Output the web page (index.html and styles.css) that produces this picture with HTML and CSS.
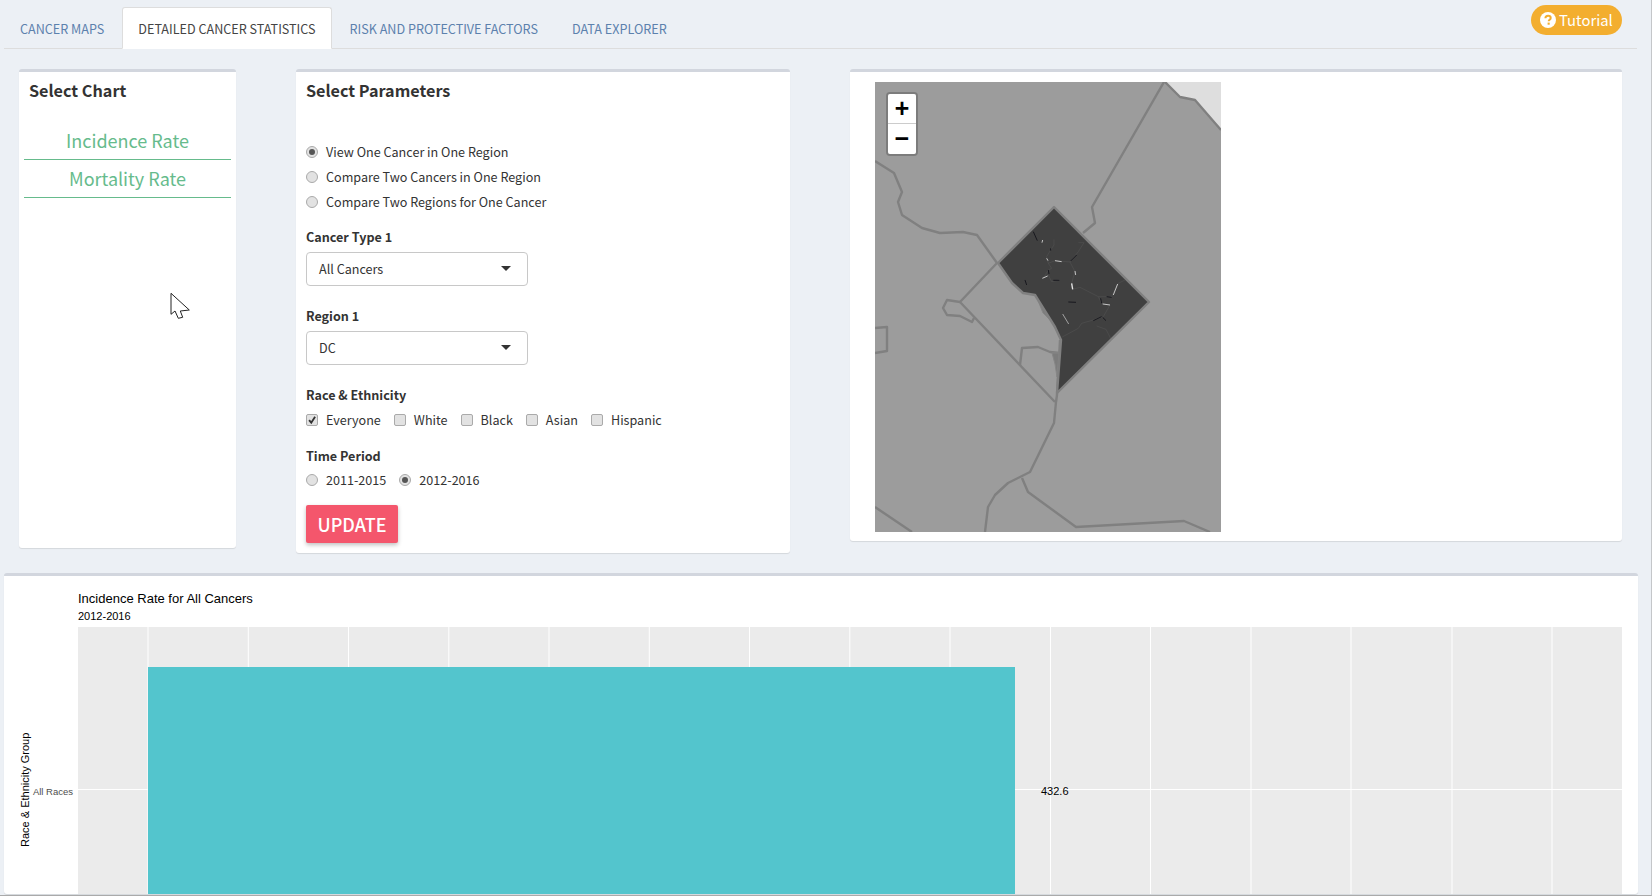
FILE: index.html
```html
<!DOCTYPE html>
<html>
<head>
    <meta charset="UTF-8">
    <title>Detailed Cancer Statistics</title>
    <link rel="stylesheet" href="styles.css">
</head>
<body>
    <div class="topbar">
        <ul class="tabs">
            <li class="tab">CANCER MAPS</li>
            <li class="tab active">DETAILED CANCER STATISTICS</li>
            <li class="tab">RISK AND PROTECTIVE FACTORS</li>
            <li class="tab">DATA EXPLORER</li>
        </ul>
        <button type="button" class="tutorial">
            <svg class="tutorial-icon" viewBox="0 0 16 16">
                <circle cx="8" cy="8" r="8" fill="#fff"/>
                <path d="M5.4 6.2c0-1.6 1.2-2.5 2.7-2.5s2.6.9 2.6 2.2c0 1.9-2 1.8-2 3.3" fill="none" stroke="#f3ae2f" stroke-width="2"/>
                <rect x="7.6" y="10.6" width="2.1" height="2.1" fill="#f3ae2f"/>
            </svg>
            Tutorial
        </button>
    </div>

    <div class="top-row">
        <section class="box chart-box">
            <h3 class="box-title">Select Chart</h3>
            <a class="chart-link first">Incidence Rate</a>
            <a class="chart-link">Mortality Rate</a>
        </section>

        <section class="box params-box">
            <h3 class="box-title">Select Parameters</h3>
            <div class="radio-stack">
                <label class="option"><span class="radio on"></span>View One Cancer in One Region</label>
                <label class="option"><span class="radio"></span>Compare Two Cancers in One Region</label>
                <label class="option"><span class="radio"></span>Compare Two Regions for One Cancer</label>
            </div>

            <div class="field-label label-type">Cancer Type 1</div>
            <div class="select"><span>All Cancers</span><i class="caret"></i></div>

            <div class="field-label label-region">Region 1</div>
            <div class="select"><span>DC</span><i class="caret"></i></div>

            <div class="field-label label-race">Race &amp; Ethnicity</div>
            <div class="inline-options">
                <label class="option"><span class="check on"><svg viewBox="0 0 12 12"><path d="M2.5 6.2l2.6 3 4.6-7" fill="none" stroke="#333" stroke-width="2.2"/></svg></span>Everyone</label>
                <label class="option"><span class="check"></span>White</label>
                <label class="option"><span class="check"></span>Black</label>
                <label class="option"><span class="check"></span>Asian</label>
                <label class="option"><span class="check"></span>Hispanic</label>
            </div>

            <div class="field-label label-time">Time Period</div>
            <div class="inline-options time-options">
                <label class="option"><span class="radio"></span>2011-2015</label>
                <label class="option"><span class="radio on"></span>2012-2016</label>
            </div>

            <button type="button" class="update">UPDATE</button>
        </section>

        <section class="box map-box">
            <div class="map">
                <svg class="map-svg" viewBox="0 0 346 450">
                    <rect width="346" height="450" fill="#9c9c9c"/>
                    <path d="M290 0L305 15 320 18 346 48V0z" fill="#dedede"/>
                    <g class="county">
                        <path d="M290 0L305 15 320 18 346 48"/>
                        <path d="M289 0L217 125 220 141 208 151"/>
                        <path d="M0 79L19 91 27 110 23 120 27 133 47 146 65 151 88 150 102 153 122 181 85 220 180 320"/>
                        <path d="M85 220L72 218 68 226 72 233 85 234 97 240 99 236"/>
                        <path d="M0 246L12 245V269L0 271"/>
                        <path d="M145 283L147 266 163 265 175 270 185 271"/>
                        <path d="M185 258L182 313 181 320 179 341 155 390 133 401 120 413 113 425 110 450"/>
                        <path d="M147 396L153 410 201 445 309 439 335 450"/>
                        <path d="M0 425L37 450"/>
                    </g>
                    <path d="M162 216L168 231 177 240 185 256 180 245 160 213zM177 271H184L182 295 180 282z" fill="#7c7c7c" stroke="#868686"/>
                    <path class="dc" d="M179 125L274 220 182 311 186 258 180 245 160 213 148 211 137 201 123 181z"/>
                    <g transform="translate(105 118) scale(.3333)" fill="none">
                        <g stroke="#5c5c5c" stroke-width="1.2">
                            <path d="M222 118V135L212 150 200 170 205 190 225 182 270 186 295 155 312 128 295 128"/>
                            <path d="M270 186L285 215 275 250 278 268 300 262 355 290H395L415 250 435 240"/>
                            <path d="M205 190L215 205 205 210 190 235 205 225 215 245 238 240"/>
                            <path d="M355 290L365 310 390 315 370 350 340 360 305 370 295 385 245 412"/>
                            <path d="M350 378L378 388 392 415"/>
                        </g>
                        <g stroke="#e4e4e4" stroke-width="2.4">
                            <path d="M225 182L245 185"/>
                            <path d="M200 175L204 182"/>
                            <path d="M285 213L287 225"/>
                            <path d="M275 250L278 268" stroke-width="4"/>
                            <path d="M400 285L413 252"/>
                            <path d="M368 312L390 315"/>
                            <path d="M248 342L266 372" stroke="#bbb"/>
                            <path d="M187 235L203 228"/>
                            <path d="M188 120L186 128"/>
                        </g>
                        <g stroke="#0c0c14" stroke-width="2.4">
                            <path d="M160 95L172 122"/>
                            <path d="M212 145V152"/>
                            <path d="M272 183L290 165"/>
                            <path d="M205 210L207 222"/>
                            <path d="M220 241H238"/>
                            <path d="M135 240L140 255"/>
                            <path d="M265 306L288 307"/>
                            <path d="M362 295L365 310"/>
                            <path d="M340 362L365 350"/>
                            <path d="M368 352L378 362"/>
                            <path d="M380 290L395 292"/>
                        </g>
                    </g>
                </svg>
                <div class="zoom-bar">
                    <a class="zoom-btn">+</a>
                    <a class="zoom-btn">&#8722;</a>
                </div>
            </div>
        </section>
    </div>

    <section class="box plot-box">
        <svg class="plot-svg" viewBox="0 0 1634 318">
            <text x="74" y="27" class="plot-title">Incidence Rate for All Cancers</text>
            <text x="74" y="44" class="plot-sub">2012-2016</text>
            <rect x="74" y="51" width="1544" height="267" fill="#ebebeb"/>
            <g class="grid">
                <path d="M144 51V318M244.300 51V318M344.500 51V318M444.800 51V318M545 51V318M645.300 51V318M745.500 51V318M845.800 51V318M946 51V318M1046.500 51V318M1146.500 51V318M1247 51V318M1347 51V318M1448 51V318M1548 51V318"/>
                <path d="M74 213.500H1618"/>
            </g>
            <rect x="144" y="91" width="867" height="227" fill="#53c5cd"/>
            <text x="1037" y="218.500" class="plot-value">432.6</text>
            <text x="69" y="218.500" class="plot-tick" text-anchor="end">All Races</text>
            <text transform="translate(25 271) rotate(-90)" class="plot-axis">Race &amp; Ethnicity Group</text>
        </svg>
    </section>

    <svg class="cursor" viewBox="0 0 20 28">
        <path d="M1 1.300V22.300L5 19 8.300 26.300 12.700 25.300 10.300 19 19.300 18z" fill="#fff" stroke="#222" stroke-width="1"/>
    </svg>
</body>
</html>
```

FILE: styles.css
```css
* {
    box-sizing: border-box;
}

html, body {
    margin: 0;
    height: 896px;
    overflow: hidden;
}

body {
    position: relative;
    background-color: #ecf0f5;
    border-right: 1px solid #c4c6c9;
    border-bottom: 1px solid #aaa;
    font-family: "Noto Sans CJK SC", "Open Sans", sans-serif;
    font-size: 12.600px;
    color: #333;
    padding: 0 14px 0 4px;
}

/* top tabs */
.topbar {
    display: flex;
    justify-content: space-between;
    align-items: flex-start;
    height: 49px;
    padding-top: 5px;
    border-bottom: 1px solid #ddd;
}

.tabs {
    display: flex;
    gap: 2px;
    list-style: none;
    margin: 2px 0 0;
    padding: 0;
}

.tab {
    height: 42px;
    padding: 0 15px;
    border: 1px solid transparent;
    border-radius: 3px 3px 0 0;
    font-size: 12.600px;
    line-height: 41px;
    color: #5c81ad;
}

.tab.active {
    background-color: #fff;
    border-color: #ddd #ddd #fff;
    color: #444;
}

.tutorial {
    display: flex;
    align-items: center;
    gap: 3px;
    width: 91px;
    height: 30px;
    margin-right: 15px;
    padding: 0 0 2px 9px;
    border: none;
    border-radius: 15px;
    background-color: #f3ae2f;
    color: #fff;
    font-family: inherit;
    font-size: 14.800px;
}

.tutorial-icon {
    width: 16px;
    height: 16px;
    margin-top: 2px;
}

/* boxes */
.box {
    background-color: #fff;
    border-top: 3px solid #d2d6de;
    border-radius: 3px;
    box-shadow: 0 1px 1px rgba(0, 0, 0, 0.1);
}

.top-row {
    display: flex;
    align-items: flex-start;
    gap: 60px;
    margin-top: 20px;
    padding-left: 15px;
}

.box-title {
    margin: 0;
    font-size: 16.200px;
    font-weight: 700;
    line-height: 24px;
    color: #333;
}

.chart-box {
    width: 217px;
    height: 479px;
    padding: 6px 5px 0;
}

.chart-box .box-title {
    padding-left: 5px;
}

.chart-link {
    display: block;
    height: 38px;
    border-bottom: 1px solid #66bb8c;
    text-align: center;
    font-size: 18px;
    line-height: 36px;
    color: #66bb8c;
}

.chart-link.first {
    margin-top: 20px;
}

.params-box {
    width: 494px;
    height: 484px;
    padding: 6px 10px 0;
}

.radio-stack {
    display: flex;
    flex-direction: column;
    gap: 5px;
    margin-top: 40px;
}

.option {
    display: flex;
    align-items: center;
    height: 20px;
    line-height: 20px;
    white-space: nowrap;
}

.radio, .check {
    flex: none;
    width: 12px;
    height: 12px;
    margin-right: 8px;
    background-color: #e2e2e2;
    border: 1px solid #aaa;
}

.radio {
    border-radius: 50%;
    display: flex;
    align-items: center;
    justify-content: center;
}

.radio.on::after {
    content: "";
    width: 6px;
    height: 6px;
    border-radius: 50%;
    background-color: #555;
}

.check {
    border-radius: 2px;
}

.check svg {
    display: block;
    width: 10px;
    height: 10px;
}

.field-label {
    font-weight: 700;
    line-height: 20px;
    color: #333;
}

.label-type { margin-top: 15px; }
.label-region { margin-top: 20px; }
.label-race { margin-top: 20px; }
.label-time { margin-top: 16px; }

.select {
    display: flex;
    align-items: center;
    justify-content: space-between;
    width: 222px;
    height: 34px;
    margin-top: 5px;
    padding: 0 16px 2px 12px;
    border: 1px solid #c8c8c8;
    border-radius: 4px;
}

.caret {
    width: 0;
    height: 0;
    border-left: 5px solid transparent;
    border-right: 5px solid transparent;
    border-top: 5px solid #333;
}

.inline-options {
    display: flex;
    gap: 13px;
    margin-top: 5px;
}

.time-options {
    margin-top: 4px;
}

.update {
    display: block;
    width: 92px;
    height: 38px;
    margin-top: 15px;
    padding: 0;
    border: none;
    border-radius: 2px;
    background-color: #f4566c;
    box-shadow: 0 2px 4px rgba(0, 0, 0, 0.25);
    color: #fff;
    font-family: inherit;
    font-size: 18px;
    font-weight: 500;
    line-height: 38px;
}

.map-box {
    width: 772px;
    height: 472px;
    padding: 10px 25px;
}

.map {
    position: relative;
    width: 346px;
    height: 450px;
}

.map-svg {
    display: block;
    width: 346px;
    height: 450px;
}

.county path {
    fill: none;
    stroke: #808080;
    stroke-width: 2.400;
    stroke-linejoin: round;
}

.dc {
    fill: #404040;
    stroke: #808080;
    stroke-width: 2.400;
    stroke-linejoin: round;
}

.zoom-bar {
    position: absolute;
    left: 11px;
    top: 10px;
    width: 32px;
    border: 2px solid rgba(0, 0, 0, 0.2);
    border-radius: 4px;
    background-clip: padding-box;
}

.zoom-btn {
    display: block;
    height: 30px;
    background-color: #fff;
    border-bottom: 1px solid #ccc;
    text-align: center;
    font-family: "Liberation Mono", monospace;
    font-size: 25px;
    font-weight: 700;
    line-height: 34px;
    color: #000;
}

.zoom-btn:first-child {
    border-radius: 2px 2px 0 0;
}

.zoom-btn:last-child {
    border-bottom: none;
    border-radius: 0 0 2px 2px;
}

/* bottom chart */
.plot-box {
    height: 321px;
    margin-top: 20px;
    width: 1634px;
}

.plot-svg {
    display: block;
    width: 1634px;
    height: 318px;
}

.plot-svg text {
    font-family: "Liberation Sans", Arial, sans-serif;
    fill: #000;
}

.plot-title { font-size: 13px; }
.plot-sub { font-size: 11px; }
.plot-value { font-size: 11px; }
.plot-axis { font-size: 11px; }
.plot-svg .plot-tick { font-size: 9.500px; fill: #4d4d4d; }

.grid path {
    fill: none;
    stroke: #fff;
    stroke-width: 1;
}

.cursor {
    position: absolute;
    left: 170px;
    top: 292px;
    width: 20px;
    height: 28px;
}
```
